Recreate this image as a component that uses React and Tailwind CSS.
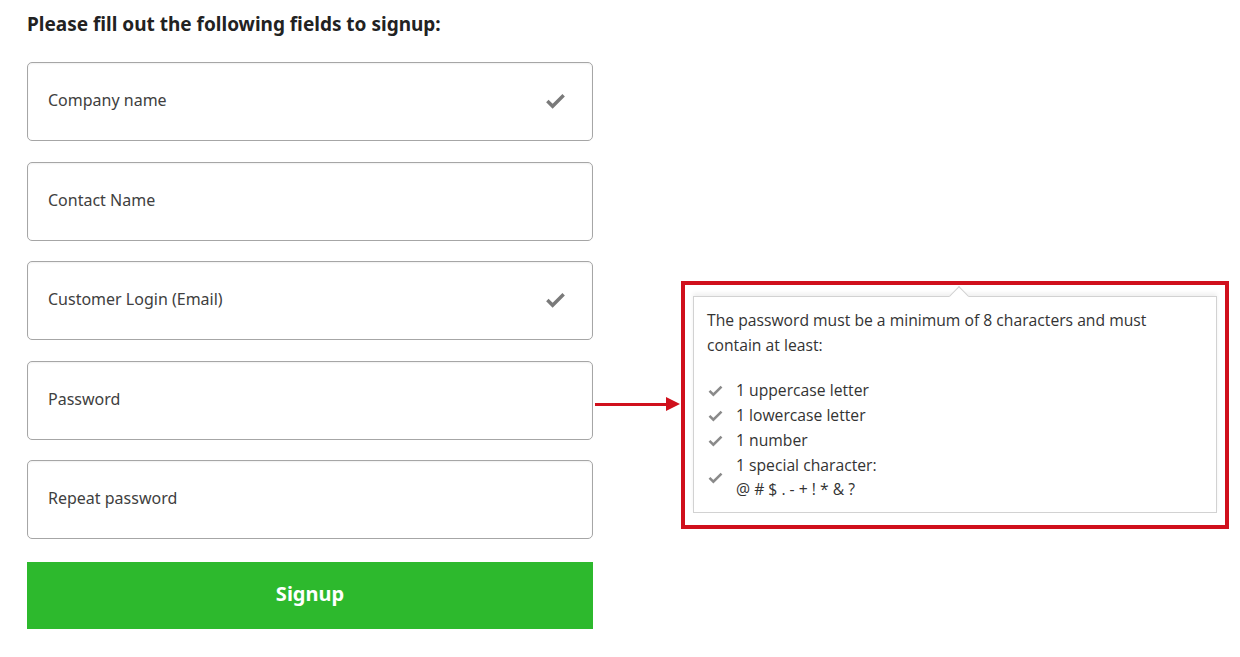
import React from "react";

const Check = ({ className = "" }) => (
  <svg viewBox="0 0 24 24" className={className} fill="none">
    <path d="M3.5 12.5l5.5 5.5L20.5 6.5" stroke="currentColor" strokeWidth="3.6" strokeLinecap="butt" strokeLinejoin="miter" />
  </svg>
);

function Field({ label, checked }) {
  return (
    <div className="h-[79px] w-[566px] rounded-[5px] border border-[#a6a6a6] bg-white flex items-center justify-between pl-[20px] pr-[25px] shadow-[inset_0_1px_2px_rgba(0,0,0,0.06)]">
      <span className="text-[16px] text-[#404040] -mt-[3px]">{label}</span>
      {checked && <Check className="w-[23px] h-[23px] text-[#7a7a7a] -mt-[2px]" />}
    </div>
  );
}

const items = ["1 uppercase letter", "1 lowercase letter", "1 number"];

export default function App() {
  return (
    <div className="w-[1240px] h-[657px] bg-white flex" style={{ fontFamily: '"Noto Sans", sans-serif' }}>
      <div className="pl-[27px] pt-[11px] flex flex-col">
        <h1 className="text-[19px] font-bold text-[#222] leading-[26px] mb-[25px]">
          Please fill out the following fields to signup:
        </h1>
        <div className="flex flex-col gap-[20.5px]">
          <Field label="Company name" checked />
          <Field label="Contact Name" />
          <Field label="Customer Login (Email)" checked />
          <Field label="Password" />
          <Field label="Repeat password" />
        </div>
        <button className="mt-[23px] h-[67px] w-[566px] bg-[#2db92d] text-white text-[20px] font-bold pb-[4px]">
          Signup
        </button>
      </div>
      <div className="flex items-start">
        <div className="mt-[397px] ml-[2px] flex items-center">
          <div className="w-[72px] h-[3px] bg-[#d0101c]" />
          <svg width="14" height="14" viewBox="0 0 14 14" className="-ml-[1px]">
            <polygon points="0,0 14,7 0,14" fill="#d0101c" />
          </svg>
        </div>
        <div className="mt-[281px] ml-[1px] w-[548px] h-[248px] border-[4px] border-[#d0101c] pl-[8px] pt-[11px]">
          <div className="relative w-[524px] h-[217px] border border-[#d2d2d2] bg-white shadow-[0_-3px_4px_rgba(0,0,0,0.06)] pl-[13px] pt-[11px]" style={{ fontFamily: '"Open Sans", sans-serif' }}>
            <div className="absolute -top-[8px] left-[258px] w-[14px] h-[14px] rotate-45 bg-white border-l border-t border-[#d2d2d2]" />
            <p className="relative w-[480px] text-[15.7px] leading-[25px] text-[#333]">
              The password must be a minimum of 8 characters and must contain at least:
            </p>
            <ul className="relative mt-[20px] text-[15.7px] leading-[25px] text-[#333]">
              {items.map((t) => (
                <li key={t} className="flex items-center gap-[12px]">
                  <Check className="w-[17px] h-[17px] text-[#8a8a8a]" />
                  <span>{t}</span>
                </li>
              ))}
              <li className="flex items-center gap-[12px]">
                <Check className="w-[17px] h-[17px] text-[#8a8a8a]" />
                <span className="leading-[24px]">
                  1 special character:
                  <br />@ # $ . - + ! * &amp; ?
                </span>
              </li>
            </ul>
          </div>
        </div>
      </div>
    </div>
  );
}
